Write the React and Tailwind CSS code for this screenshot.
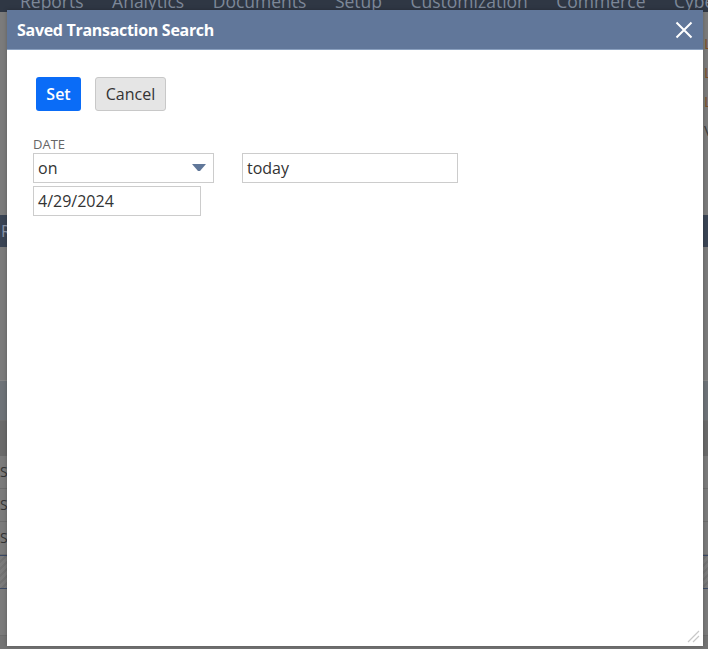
import React from 'react';

const NAV = ['Reports', 'Analytics', 'Documents', 'Setup', 'Customization', 'Commerce', 'Cybe'];

const BackgroundPage = () => (
  <div className="flex flex-col h-full bg-[#7b7b7b]">
    {/* dimmed top nav, mostly hidden under the dialog */}
    <div className="h-[12px] bg-[#2f3744] flex pl-[20px] overflow-hidden">
      <div className="flex gap-[28.5px] -mt-[9px] text-[#7d8899] text-[17.5px] leading-[20px] whitespace-nowrap">
        {NAV.map((n) => (
          <span key={n}>{n}</span>
        ))}
      </div>
    </div>
    <div className="h-[203px] flex flex-col items-end pt-[22px] gap-[11px] text-[#7a4f2a] text-[15px] leading-[18px]">
      <span className="w-[4px] overflow-hidden">L</span>
      <span className="w-[4px] overflow-hidden">L</span>
      <span className="w-[4px] overflow-hidden">L</span>
      <span className="w-[4px] overflow-hidden text-[#3b3b3b]">V</span>
    </div>
    <div className="h-[32px] bg-[#3a4454] text-[#8b96a8] text-[16px] leading-[32px] pl-[1px]">R</div>
    <div className="h-[133px]" />
    <div className="h-[40px] bg-[#6e7378] border-t border-[#858585]" />
    <div className="h-[36px] bg-[#6a6a6a] border-t border-[#6f6f6f]" />
    {['S', 'S', 'S'].map((s, i) => (
      <div key={i} className="h-[33px] border-b border-[#6c6c6c] text-[#333] text-[14px] leading-[32px]">
        {s}
      </div>
    ))}
    <div className="h-[34px] border-t border-[#3b4a66] border-b bg-[repeating-linear-gradient(135deg,#7b7b7b_0px,#7b7b7b_3px,#727272_3px,#727272_5px)]" />
    <div className="h-[46px]" />
    <div className="flex-1 border-t border-[#6c6c6c] bg-[#747474]" />
  </div>
);

const ResizeHandle = () => (
  <svg className="absolute right-[3px] bottom-[3px]" width="14" height="14" viewBox="0 0 14 14">
    <path d="M2 13 L13 2 M7 13 L13 7" stroke="#c8c8c8" strokeWidth="1.2" fill="none" />
  </svg>
);

export default function App() {
  return (
    <div
      className="relative w-[708px] h-[649px] overflow-hidden"
      style={{ fontFamily: '"Open Sans", "Liberation Sans", sans-serif' }}
    >
      <BackgroundPage />

      {/* Dialog */}
      <div className="absolute left-[7px] top-[10px] w-[696px] h-[636px] bg-white flex flex-col shadow-[0_0_4px_rgba(0,0,0,0.25)]">
        <div className="h-[40px] bg-[#61779a] border-b border-[#8aa0bf] flex items-center justify-between pl-[10px] pr-[10px]">
          <span className="text-white text-[16px] font-bold tracking-[-0.3px]">Saved Transaction Search</span>
          <svg width="18" height="18" viewBox="0 0 18 18">
            <path d="M1.5 1.5 L16.5 16.5 M16.5 1.5 L1.5 16.5" stroke="white" strokeWidth="2" fill="none" />
          </svg>
        </div>

        <div className="flex flex-col pl-[29px] pt-[27px]">
          <div className="flex gap-[14px]">
            <button className="h-[34px] w-[45px] rounded-[3px] bg-[#0a6cf7] text-white text-[16px] font-semibold">
              Set
            </button>
            <button className="h-[34px] w-[71px] rounded-[3px] bg-[#e5e5e5] border border-[#c8c8c8] text-[#333] text-[16px]">
              Cancel
            </button>
          </div>
        </div>

        <div className="flex flex-col pl-[26px]">
          <div className="mt-[25px] text-[#666] text-[13px] leading-[16px] uppercase">Date</div>
          <div className="flex gap-[28px] mt-[1px]">
            <div className="w-[181px] h-[30px] border border-[#cccccc] flex items-center justify-between pl-[4px] pr-[7px]">
              <span className="text-[#333] text-[16px]">on</span>
              <svg width="14" height="8" viewBox="0 0 14 8">
                <path d="M0 0 H14 L8 7 H6 Z" fill="#607799" />
              </svg>
            </div>
            <div className="w-[216px] h-[30px] border border-[#cccccc] flex items-center pl-[4px]">
              <span className="text-[#333] text-[16px]">today</span>
            </div>
          </div>
          <div className="w-[168px] h-[30px] border border-[#cccccc] flex items-center pl-[4px] mt-[3px]">
            <span className="text-[#333] text-[16px]">4/29/2024</span>
          </div>
        </div>

        <ResizeHandle />
      </div>
    </div>
  );
}
